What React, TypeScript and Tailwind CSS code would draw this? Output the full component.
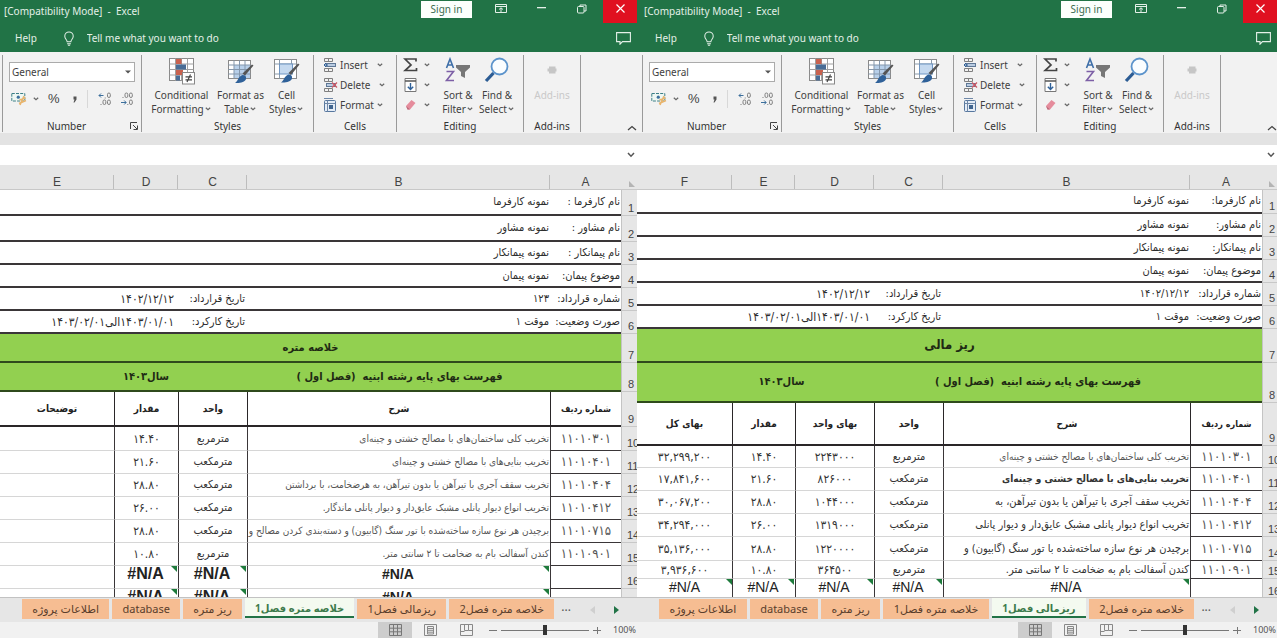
import React from "react";

type SheetRow = {
  n: string;
  h: string;
};

type Item = {
  row: SheetRow;
  code: string;
  desc: string;
  descClass: string;
  values: string[];
};

type Tab = { label: string; active?: boolean };

const UI_FONT = "font-['Noto_Sans','DejaVu_Sans',sans-serif]";
const FA_FONT = "font-['DejaVu_Sans_Condensed','DejaVu_Sans',sans-serif]";

function Caret({ className = "" }: { className?: string }) {
  return (
    <svg viewBox="0 0 8 6" className={`inline-block h-[6px] w-2 shrink-0 ${className}`} fill="none" stroke="#666" strokeWidth="1.2">
      <path d="M1.8 1.8 4 3.8 6.2 1.8" />
    </svg>
  );
}

function TableIcon({ variant }: { variant: "conditional" | "format" | "cell" }) {
  return (
    <svg viewBox="0 0 28 28" className="h-7 w-7" fill="none">
      {variant === "conditional" && (
        <>
          <rect x="1.5" y="1.5" width="24" height="22" fill="#fff" stroke="#8a8a8a" />
          <path d="M1.5 7h24M1.5 12.5h24M1.5 18h24M7.5 1.5v22M13.5 1.5v22M19.5 1.5v22" stroke="#a0a0a0" />
          <rect x="8" y="2" width="5.5" height="5" fill="#c9624f" />
          <rect x="8" y="7.5" width="10" height="5" fill="#4a6d96" />
          <rect x="8" y="13" width="7" height="5" fill="#c9624f" />
          <rect x="8" y="18.5" width="4" height="5" fill="#4a6d96" />
          <rect x="14.5" y="15.5" width="12" height="11.5" fill="#fff" stroke="#888" />
          <path d="M17.5 19.800h6.500M17.5 22.800h6.500M22.500 17.500l-3.500 7.500" stroke="#444" strokeWidth="1.200" />
        </>
      )}
      {variant === "format" && (
        <>
          <rect x="1.5" y="3.5" width="22" height="18" fill="#fff" stroke="#8a8a8a" />
          <rect x="7" y="8" width="16" height="13" fill="#b8d0ea" />
          <path d="M1.5 8h22M1.5 12.5h22M1.5 17h22M7 3.5v18M12.5 3.5v18M18 3.5v18" stroke="#8497ac" />
          <path d="M26.5 8.5 18 18.5l-2.5-2L25 7.5z" fill="#555" />
          <path d="M15.5 18c2.5 0 4 1.5 3.500 4-1 3-6 4.500-11 4 3-1.500 3-6.500 7.500-8z" fill="#2f6199" />
        </>
      )}
      {variant === "cell" && (
        <>
          <rect x="1.5" y="2.5" width="22" height="19" fill="#fff" stroke="#8a8a8a" />
          <path d="M1.5 7h22M6.5 2.5v19M18.5 2.5v4.500M1.5 17h5" stroke="#8a9aab" />
          <rect x="6.5" y="7" width="13" height="10" fill="#c5d9ef" stroke="#6e95c2" />
          <path d="M26.5 7.5 18 18l-2.500-2L25 6.500z" fill="#555" />
          <path d="M15.5 17.500c2.500 0 4 1.500 3.500 4-1 3-6 4.500-11 4 3-1.500 3-6.500 7.500-8z" fill="#2f6199" />
        </>
      )}
    </svg>
  );
}

function CellsIcon({ variant }: { variant: "insert" | "delete" | "format" }) {
  return (
    <svg viewBox="0 0 15 14" className="h-[14px] w-[15px] shrink-0" fill="none">
      {variant !== "format" ? (
        <>
          <path d="M1.5.5h8v3h-8zM1.5 10.500h8v3h-8zM5.5.5v3M5.5 10.500v3" stroke="#808080" />
          <rect x="3.5" y="5.500" width="9" height="3" fill="#b9cce2" stroke="#5f7896" />
          {variant === "insert" ? (
            <path d="M5 7H1M3 5 1 7l2 2" stroke="#2f6199" />
          ) : (
            <path d="m9 4.500 5 5M14 4.500l-5 5" stroke="#d05a66" strokeWidth="1.300" />
          )}
        </>
      ) : (
        <>
          <rect x="1.5" y="2.500" width="11" height="11" rx="1" fill="#e4ecf6" stroke="#56779e" />
          <path d="M1 .5h9M1.5 5.500h11M4.5 2.500v11" stroke="#6f88a8" />
          <rect x="6" y="7" width="4" height="4" fill="#3f648f" />
        </>
      )}
    </svg>
  );
}

function Group({ label, className, launcher, children }: { label: string; className: string; launcher?: boolean; children: React.ReactNode }) {
  return (
    <section className={`flex h-[77px] shrink-0 flex-col border-r border-[#9a9a9a] ${className}`} aria-label={label}>
      <div className="flex flex-1 justify-center">{children}</div>
      <div className="flex h-[12px] items-center text-[10px] leading-3 text-[#333]">
        <span className="flex-1 text-center">{label}</span>
        {launcher && (
          <button aria-label="Number format settings" className="mr-[2px]">
            <svg viewBox="0 0 9 9" className="h-[9px] w-[9px]" fill="none" stroke="#444">
              <path d="M.5 7V.5H7M3 3l4 4M7.5 3.500v4h-4" />
            </svg>
          </button>
        )}
      </div>
    </section>
  );
}

function BigButton({ icon, top, bottom, className }: { icon: React.ReactNode; top: string; bottom?: string; className: string }) {
  return (
    <button className={`flex flex-col items-center pt-[2px] ${className}`}>
      <span className="flex h-[31px] items-start">{icon}</span>
      <span className="text-[10px] leading-[14px] whitespace-nowrap">{top}</span>
      {bottom && (
        <span className="flex items-center text-[10px] leading-[14px] whitespace-nowrap">
          {bottom}
          <Caret />
        </span>
      )}
    </button>
  );
}

function TitleBar() {
  return (
    <header className="bg-[#217346] text-[#e4f0e8]">
      <div className="flex h-6 items-start">
        <h1 className="flex-1 pl-1 text-[10px] leading-[22px] whitespace-pre">[Compatibility Mode]  -  Excel</h1>
        <button className="mt-[1px] mr-[23px] h-[17px] w-[51px] bg-[#fbfffc] text-[10px] leading-[17px] text-[#3b6b4f]">Sign in</button>
        <button aria-label="Ribbon display options" className="mt-1 mr-[30px]">
          <svg viewBox="0 0 12 9" className="h-[9px] w-3" fill="none" stroke="currentColor">
            <path d="M.5.5h11v8H.5zM.5 2.500h11M6 8V4M4 5.500 6 3.800l2 1.700" />
          </svg>
        </button>
        <button aria-label="Minimize" className="mt-[7px] mr-[31px]">
          <svg viewBox="0 0 9 2" className="h-[2px] w-[9px]" fill="currentColor">
            <path d="M0 0h9v1.300H0z" />
          </svg>
        </button>
        <button aria-label="Restore" className="mt-1 mr-4">
          <svg viewBox="0 0 10 10" className="h-[10px] w-[10px]" fill="none" stroke="currentColor">
            <rect x=".5" y="2.500" width="6.500" height="6.500" rx="1" />
            <path d="M3 2.500V1h6v6H7" />
          </svg>
        </button>
        <button aria-label="Close" className="flex h-[23px] w-[34px] items-center justify-center bg-[#e01020] pb-[6px]">
          <svg viewBox="0 0 9 9" className="h-[9px] w-[9px]" fill="none" stroke="#fff" strokeWidth="1.200">
            <path d="m.5.5 8 8M8.500.5l-8 8" />
          </svg>
        </button>
      </div>
      <nav className="flex h-7 items-center pr-[6px] pl-[15px] text-[10px]">
        <button>Help</button>
        <svg viewBox="0 0 12 16" className="mr-[12px] ml-[26px] h-[15px] w-3" fill="none" stroke="currentColor" strokeWidth="1.100">
          <path d="M4 11.500c0-2-2.500-3-2.500-6a4.500 4.500 0 0 1 9 0c0 3-2.500 4-2.500 6zM4 13.500h4M4.800 15.300h2.400" />
        </svg>
        <input aria-label="Tell me what you want to do" placeholder="Tell me what you want to do" className="w-44 bg-transparent outline-none placeholder:text-[#e4f0e8]" />
        <button aria-label="Comments" className="ml-auto">
          <svg viewBox="0 0 15 13" className="h-[13px] w-[15px]" fill="none" stroke="currentColor" strokeWidth="1.100">
            <path d="M.6.6h13.800v9H6.500L4 12.200V9.600H.6z" />
          </svg>
        </button>
      </nav>
    </header>
  );
}

function Ribbon() {
  return (
    <div className="flex h-[81px] items-start overflow-hidden bg-[#f2f2f2] pt-[3px] text-[#3f3f3f]">
      <div className="h-[77px] w-[3px] shrink-0 border-r border-[#9a9a9a]" />
      <Group label="Number" className="w-[139px]" launcher>
        <div className="flex flex-1 flex-col px-[6px] pt-[7px]">
          <div className="relative h-5">
            <select aria-label="Number format" className="block h-5 w-full appearance-none border border-[#ababab] bg-white pl-[2px] text-[10px] leading-[18px] outline-none">
              <option>General</option>
            </select>
            <svg viewBox="0 0 6 4" className="pointer-events-none absolute top-2 right-1 h-1 w-[6px]" fill="#555">
              <path d="M0 .5h6L3 3.500z" />
            </svg>
          </div>
          <div className="mt-[9px] flex h-4 items-center">
            <button aria-label="Accounting format" className="ml-[2px] flex items-center gap-1">
              <svg viewBox="0 0 17 14" className="h-[14px] w-[17px]" fill="none">
                <rect x=".8" y="1.500" width="13" height="7.500" fill="#eef7f3" stroke="#3c7f86" strokeDasharray="3 1.200" />
                <circle cx="7.300" cy="5.200" r="1.600" fill="#3c6f9c" />
                <path d="M13 4 9 13M14.500 6l-6 2M15 8.500l-7 3" stroke="#e9b56e" strokeWidth="1.600" />
              </svg>
              <Caret />
            </button>
            <button className="ml-[8px] font-['Liberation_Sans',sans-serif] text-[13px] leading-4">%</button>
            <button aria-label="Comma style" className="ml-[13px]">
              <svg viewBox="0 0 4 7" className="h-[7px] w-1" fill="#555">
                <path d="M.5.5h3v3L1.500 6.500H.5L1.500 3.500h-1z" />
              </svg>
            </button>
            <span className="mx-[10px] h-[18px] border-l border-[#d8d8d8]" />
            <button aria-label="Increase decimal">
              <svg viewBox="0 0 14 14" className="h-[14px] w-[14px]" fill="none" stroke="#808080">
                <path d="M5.500 3.500H1M3 1.500l-2 2 2 2" stroke="#3c6f9c" />
                <rect x="9.500" y="1" width="2.800" height="4.500" rx="1.400" />
                <rect x="5" y="8" width="2.800" height="4.500" rx="1.400" />
                <rect x="9.500" y="8" width="2.800" height="4.500" rx="1.400" />
                <path d="M7.200 5.500v1M3 12v1" />
              </svg>
            </button>
            <button aria-label="Decrease decimal" className="ml-2">
              <svg viewBox="0 0 14 14" className="h-[14px] w-[14px]" fill="none" stroke="#808080">
                <rect x="5" y="1" width="2.800" height="4.500" rx="1.400" />
                <rect x="9.500" y="1" width="2.800" height="4.500" rx="1.400" />
                <path d="M1 10.500h5M4.200 8.500l2 2-2 2" stroke="#3c6f9c" />
                <rect x="9.500" y="8" width="2.800" height="4.500" rx="1.400" />
                <path d="M3 5v1M7.800 12v1" />
              </svg>
            </button>
          </div>
        </div>
      </Group>
      <Group label="Styles" className="w-[172px]">
        <BigButton className="w-[66px]" icon={<TableIcon variant="conditional" />} top="Conditional" bottom="Formatting" />
        <BigButton className="w-[52px]" icon={<TableIcon variant="format" />} top="Format as" bottom="Table" />
        <BigButton className="w-[40px]" icon={<TableIcon variant="cell" />} top="Cell" bottom="Styles" />
      </Group>
      <Group label="Cells" className="w-[83px]">
        <div className="flex flex-1 flex-col pl-[9px] text-[10px]">
          <button className="flex h-5 items-center gap-[2px]">
            <CellsIcon variant="insert" />
            Insert
            <Caret className="ml-[6px]" />
          </button>
          <button className="flex h-5 items-center gap-[2px]">
            <CellsIcon variant="delete" />
            Delete
            <Caret className="ml-[6px]" />
          </button>
          <button className="flex h-5 items-center gap-[2px]">
            <CellsIcon variant="format" />
            Format
            <Caret />
          </button>
        </div>
      </Group>
      <Group label="Editing" className="w-[127px]">
        <div className="mr-[2px] flex w-[34px] flex-col">
          <button aria-label="AutoSum" className="flex h-5 items-center gap-[5px]">
            <svg viewBox="0 0 15 14" className="h-[14px] w-[15px]" fill="none" stroke="#444" strokeWidth="1.700">
              <path d="M13 3.500V1H2l6 6-6 5.500h11.500V10" />
            </svg>
            <Caret />
          </button>
          <button aria-label="Fill" className="flex h-5 items-center gap-[5px]">
            <svg viewBox="0 0 15 14" className="h-[14px] w-[15px]" fill="none">
              <path d="M2 .5h11v13H2z" fill="#fff" stroke="#777" />
              <path d="M2 3h11" stroke="#555" strokeWidth="1.500" />
              <path d="M7.500 5v6.500M4.800 8.800l2.700 2.700 2.700-2.700" stroke="#2f6199" strokeWidth="1.400" />
            </svg>
            <Caret />
          </button>
          <button aria-label="Clear" className="flex h-5 items-center gap-[5px]">
            <svg viewBox="0 0 15 14" className="h-[14px] w-[15px]">
              <path d="m3 8 5.500-6 4 3L7 11.500H4.500z" fill="#e58c9c" />
              <path d="m3 8 4 3.500H4.500z" fill="#b9687a" />
            </svg>
            <Caret />
          </button>
        </div>
        <BigButton
          className="w-[38px]"
          icon={
            <svg viewBox="0 0 28 26" className="h-[26px] w-7" fill="none">
              <path d="m2.500 11 3.500-9 3.500 9M3.800 8h4.400" stroke="#3f6fa8" strokeWidth="1.600" />
              <path d="M2.500 14.500h7L2.500 23.500h7.500" stroke="#7d5fa6" strokeWidth="1.600" />
              <path d="M12 8h14v2.500l-5 4.500v6l-4-2v-4l-5-4.500z" fill="#777" />
            </svg>
          }
          top="Sort &"
          bottom="Filter"
        />
        <BigButton
          className="w-[40px]"
          icon={
            <svg viewBox="0 0 26 26" className="h-[26px] w-[26px]" fill="none">
              <path d="M9.500 16 2 24" stroke="#2c5c94" strokeWidth="3.200" />
              <circle cx="15.500" cy="9.500" r="8" fill="#fafdff" stroke="#5b93cb" strokeWidth="1.800" />
            </svg>
          }
          top="Find &"
          bottom="Select"
        />
      </Group>
      <Group label="Add-ins" className="w-[57px]">
        <button disabled className="flex flex-col items-center pt-[2px] text-[#c9c9c9]">
          <span className="flex h-[31px] items-center pb-[6px]">
            <svg viewBox="0 0 10 10" className="h-[10px] w-[10px]" fill="#c6c6c6">
              <path d="M2 1.500h6.500v7H2z" />
              <path d="M.5 3.500h9v3h-9z" />
            </svg>
          </span>
          <span className="text-[10px] leading-[14px] whitespace-nowrap">Add-ins</span>
        </button>
      </Group>
      <button aria-label="Collapse ribbon" className="mt-[70px] ml-auto">
        <svg viewBox="0 0 10 6" className="h-[6px] w-[10px]" fill="none" stroke="#444" strokeWidth="1.300">
          <path d="M1 5 5 1.500 9 5" />
        </svg>
      </button>
    </div>
  );
}

function FormulaBar() {
  return (
    <div className="border-t-[12px] border-[#e3e3e3]">
      <div className="flex h-5 items-center bg-white">
        <input aria-label="Formula bar" className="h-5 flex-1 bg-white outline-none" />
        <button aria-label="Expand formula bar" className="mr-[2px]">
          <svg viewBox="0 0 8 6" className="h-[6px] w-2" fill="none" stroke="#555" strokeWidth="1.500">
            <path d="M1 1 4 4.200 7 1" />
          </svg>
        </button>
      </div>
    </div>
  );
}

function RowHeader({ row }: { row: SheetRow }) {
  return (
    <th scope="row" dir="ltr" className="overflow-hidden border-b border-l border-b-[#c8c8c8] border-l-[#c4c4c4] bg-[#e6e6e6] pl-[6px] text-left align-bottom font-['Liberation_Sans',sans-serif] text-[11px] leading-[14px] font-normal text-[#444]">
      {row.n}
    </th>
  );
}

function ColumnHeads({ letters }: { letters: string[] }) {
  return (
    <thead>
      <tr className="h-[25px] bg-[#e6e6e6] font-['Liberation_Sans',sans-serif] text-[12px] leading-[14px] text-[#444]">
        <th className="border-b border-[#c8c8c8] pb-[2px] align-bottom font-normal">
          <svg viewBox="0 0 6 6" className="mr-[2px] ml-auto h-[6px] w-[6px]" fill="#b4b4b4">
            <path d="M0 0v6h6z" />
          </svg>
        </th>
        {letters.map((l, i) => (
          <th
            key={l}
            scope="col"
            className={`border-b border-[#c8c8c8] bg-no-repeat pt-[9px] align-bottom font-normal ${
              i > 0 ? "bg-[linear-gradient(#bdbdbd,#bdbdbd)] bg-[length:1px_14px] bg-right-bottom" : ""
            }`}
          >
            {l}
          </th>
        ))}
      </tr>
    </thead>
  );
}

function ErrorMark() {
  return (
    <svg viewBox="0 0 6 6" className="absolute top-0 right-0 h-[6px] w-[6px]" fill="#1e7b3c">
      <path d="M0 0h6v6z" />
    </svg>
  );
}

function InfoRow({ row, label, value, label2, value2, rest }: { row: SheetRow; label: string; value: string; label2?: string; value2?: string; rest: number }) {
  return (
    <tr className={`text-[11px] ${row.h}`}>
      <RowHeader row={row} />
      <td className="border-b-2 border-[#3a3638] pr-[1px]">{label}</td>
      <td className="border-b-2 border-[#3a3638] pr-[1px]">{value}</td>
      <td className="border-b-2 border-[#3a3638] pr-[2px]">{label2}</td>
      <td colSpan={rest} className="border-b-2 border-[#3a3638] pr-1 text-[12px]">
        {value2}
      </td>
    </tr>
  );
}

const DARK = "border-l border-[#3a3638]";

function ItemRow({ item, valueClass }: { item: Item; valueClass: string }) {
  return (
    <tr className={item.row.h}>
      <RowHeader row={item.row} />
      <td className={`${DARK} border-b text-center text-[13px] text-[#555]`}>{item.code}</td>
      <td className={`border-b border-l border-b-[#d6d6d6] border-l-[#3a3638] pr-[1px] ${item.descClass}`}>{item.desc}</td>
      {item.values.map((v, i) => (
        <td
          key={i}
          className={`border-b border-b-[#d6d6d6] text-center text-[#333] ${i === 0 ? "text-[11px]" : valueClass} ${i < item.values.length - 1 ? "border-l border-l-[#3a3638]" : ""}`}
        >
          {v}
        </td>
      ))}
    </tr>
  );
}

function ErrorRow({ row, sizes, emptyLast }: { row: SheetRow; sizes: string[]; emptyLast?: boolean }) {
  return (
    <tr className={row.h}>
      <RowHeader row={row} />
      <td className={`${DARK} border-b`} />
      {sizes.map((size, i) => (
        <td
          key={i}
          dir="ltr"
          className={`relative border-b border-b-[#d6d6d6] text-center align-top font-['Liberation_Sans',sans-serif] leading-4 text-[#222] ${size} ${emptyLast || i < sizes.length - 1 ? "border-l border-l-[#3a3638]" : ""}`}
        >
          #N/A
          <ErrorMark />
        </td>
      ))}
      {emptyLast && <td className="border-b border-[#d6d6d6]" />}
    </tr>
  );
}

function HeadRow({ row, labels }: { row: SheetRow; labels: string[] }) {
  return (
    <tr className={row.h}>
      <RowHeader row={row} />
      {labels.map((l, i) => (
        <th key={l} className={`border-b-2 border-[#2a2628] text-center font-bold text-[#222] ${i === 0 ? "text-[9px]" : "text-[10px]"} ${i < labels.length - 1 ? "border-l" : ""}`}>
          {l}
        </th>
      ))}
    </tr>
  );
}

function StatusBar() {
  return (
    <footer className="flex h-4 items-center justify-end bg-[#f1f1f1] text-[#555]">
      <button aria-label="Normal view" className="flex h-4 w-[34px] items-center justify-center bg-[#cdcdcd]">
        <svg viewBox="0 0 13 12" className="h-3 w-[13px]" fill="none" stroke="#777">
          <path d="M.5.5h12v11H.5zM.5 4.200h12M.5 7.800h12M4.500.5v11M8.500.5v11" />
        </svg>
      </button>
      <button aria-label="Page layout view" className="ml-3">
        <svg viewBox="0 0 13 12" className="h-3 w-[13px]" fill="none" stroke="#888">
          <path d="M.5.5h12v11H.5zM3.500 2.500h6v7.500h-6zM4 4.500h5M4 6.300h5M4 8.200h5" />
        </svg>
      </button>
      <button aria-label="Page break preview" className="ml-[23px]">
        <svg viewBox="0 0 13 12" className="h-3 w-[13px]" fill="none" stroke="#888">
          <path d="M.5.5h12v11H.5zM4.500.5v6h4v-6M.5 7.500h4M8.500 6.500h4" />
        </svg>
      </button>
      <button aria-label="Zoom out" className="ml-4 flex h-4 items-center">
        <svg viewBox="0 0 8 8" className="h-2 w-2" stroke="#777">
          <path d="M0 4.500h8" />
        </svg>
      </button>
      <input
        type="range"
        aria-label="Zoom"
        defaultValue={50}
        className="mx-1 h-3 w-[88px] appearance-none bg-[linear-gradient(#777,#777)] bg-[length:100%_1px] bg-center bg-no-repeat [&::-webkit-slider-thumb]:h-[10px] [&::-webkit-slider-thumb]:w-1 [&::-webkit-slider-thumb]:appearance-none [&::-webkit-slider-thumb]:bg-[#333]"
      />
      <button aria-label="Zoom in" className="flex h-4 items-center">
        <svg viewBox="0 0 8 8" className="h-2 w-2" stroke="#777">
          <path d="M0 4.500h8M4.500 1v7" />
        </svg>
      </button>
      <span className="ml-3 w-6 text-[9px] leading-4 whitespace-nowrap">100%</span>
    </footer>
  );
}

function SheetTabs({ tabs }: { tabs: Tab[] }) {
  return (
    <nav className="flex h-[25px] items-start gap-[3px] border-t border-[#c2c2c2] bg-[#e6e6e6] pr-[18px] pl-[22px]" aria-label="Sheets">
      {tabs.map((t) => (
        <button
          key={t.label}
          dir="rtl"
          className={`h-5 grow leading-5 whitespace-nowrap ${
            t.active ? "border-b-2 border-[#217346] bg-[#f4faf0] text-[10px] font-bold text-[#3d7a4c]" : "mt-[1px] bg-[#f6bd92] text-[11px] text-[#5a3e2c]"
          }`}
        >
          {t.label}
        </button>
      ))}
      <span className="ml-1 text-[12px] leading-[18px] text-[#555]">...</span>
      <button aria-label="Previous sheet" className="mt-2 ml-4">
        <svg viewBox="0 0 5 8" className="h-2 w-[5px]" fill="#cfcfcf">
          <path d="M5 0v8L0 4z" />
        </svg>
      </button>
      <button aria-label="Next sheet" className="mt-2 ml-4">
        <svg viewBox="0 0 5 8" className="h-2 w-[5px]" fill="#217346">
          <path d="M0 0v8l5-4z" />
        </svg>
      </button>
    </nav>
  );
}

function Pane({ inset, tabs, children }: { inset?: boolean; tabs: Tab[]; children: React.ReactNode }) {
  return (
    <section className="flex min-w-0 flex-col overflow-hidden">
      <div className={`bg-[#217346] ${inset ? "pl-[3px]" : ""}`}>
        <TitleBar />
      </div>
      <div className={`bg-[#f2f2f2] ${inset ? "pl-[3px]" : ""}`}>
        <Ribbon />
      </div>
      <FormulaBar />
      <main dir="rtl" className={`min-h-0 flex-1 overflow-hidden bg-white text-[10px] leading-4 whitespace-nowrap text-[#2c2c2c] ${FA_FONT}`}>
        {children}
      </main>
      <SheetTabs tabs={tabs} />
      <StatusBar />
    </section>
  );
}

const square = "مترمربع";
const cubic = "مترمکعب";

const summaryDesc = "text-[10px] text-[#555]";
const summaryItems: Item[] = [
  { row: { n: "10", h: "h-6" }, code: "۱۱۰۱۰۳۰۱", desc: "تخریب کلی ساختمان‌های با مصالح خشتی و چینه‌ای", descClass: summaryDesc, values: [square, "۱۴.۴۰", ""] },
  { row: { n: "11", h: "h-[23px]" }, code: "۱۱۰۱۰۴۰۱", desc: "تخریب بنایی‌های با مصالح خشتی و چینه‌ای", descClass: summaryDesc, values: [cubic, "۲۱.۶۰", ""] },
  { row: { n: "12", h: "h-[23px]" }, code: "۱۱۰۱۰۴۰۴", desc: "تخریب سقف آجری با تیرآهن یا بدون تیرآهن، به هرضخامت، با برداشتن", descClass: summaryDesc, values: [cubic, "۲۸.۸۰", ""] },
  { row: { n: "13", h: "h-[23px]" }, code: "۱۱۰۱۰۴۱۲", desc: "تخریب  انواع دیوار پانلی مشبک عایق‌دار و دیوار پانلی ماندگار.", descClass: summaryDesc, values: [cubic, "۲۶.۰۰", ""] },
  { row: { n: "14", h: "h-[23px]" }, code: "۱۱۰۱۰۷۱۵", desc: "برچیدن هر نوع سازه ساخته‌شده با تور سنگ (گابیون) و دسته‌بندی کردن مصالح و", descClass: summaryDesc, values: [cubic, "۲۸.۸۰", ""] },
  { row: { n: "15", h: "h-[23px]" }, code: "۱۱۰۱۰۹۰۱", desc: "کندن آسفالت بام به ضخامت تا ۲ سانتی متر.", descClass: summaryDesc, values: [square, "۱۰.۸۰", ""] },
];

const costDesc = "text-[11px] text-[#333]";
const costItems: Item[] = [
  { row: { n: "10", h: "h-[22px]" }, code: "۱۱۰۱۰۳۰۱", desc: "تخریب کلی ساختمان‌های با مصالح خشتی و چینه‌ای", descClass: summaryDesc, values: [square, "۲۲۴۳۰۰۰", "۱۴.۴۰", "۳۲,۲۹۹,۲۰۰"] },
  { row: { n: "11", h: "h-[23px]" }, code: "۱۱۰۱۰۴۰۱", desc: "تخریب بنایی‌های با مصالح خشتی و چینه‌ای", descClass: "text-[10px] font-bold text-[#333]", values: [cubic, "۸۲۶۰۰۰", "۲۱.۶۰", "۱۷,۸۴۱,۶۰۰"] },
  { row: { n: "12", h: "h-[23px]" }, code: "۱۱۰۱۰۴۰۴", desc: "تخریب سقف آجری با تیرآهن یا بدون تیرآهن، به", descClass: costDesc, values: [cubic, "۱۰۴۴۰۰۰", "۲۸.۸۰", "۳۰,۰۶۷,۲۰۰"] },
  { row: { n: "13", h: "h-[23px]" }, code: "۱۱۰۱۰۴۱۲", desc: "تخریب  انواع دیوار پانلی مشبک عایق‌دار و دیوار پانلی", descClass: costDesc, values: [cubic, "۱۳۱۹۰۰۰", "۲۶.۰۰", "۳۴,۲۹۴,۰۰۰"] },
  { row: { n: "14", h: "h-6" }, code: "۱۱۰۱۰۷۱۵", desc: "برچیدن هر نوع سازه ساخته‌شده با تور سنگ (گابیون) و", descClass: costDesc, values: [cubic, "۱۲۲۰۰۰۰", "۲۸.۸۰", "۳۵,۱۳۶,۰۰۰"] },
  { row: { n: "15", h: "h-[18px]" }, code: "۱۱۰۱۰۹۰۱", desc: "کندن آسفالت بام به ضخامت تا ۲ سانتی متر.", descClass: costDesc, values: [square, "۳۶۴۵۰۰", "۱۰.۸۰", "۳,۹۳۶,۶۰۰"] },
];

const GREEN = "border-b-2 border-[#2f4a1c] bg-[#92d050] text-center font-bold text-[#1f2a14]";
const SUMMARY_ERRORS = ["text-[14px] font-bold", "text-[16px] font-bold", "text-[16px] font-bold"];
const COST_ERRORS = ["text-[14px]", "text-[14px]", "text-[14px]", "text-[14px]", "text-[14px]"];

function SummarySheet() {
  return (
    <table className="w-full table-fixed border-separate border-spacing-0">
      <colgroup>
        <col className="w-4" />
        <col className="w-[71px]" />
        <col />
        <col className="w-[69px]" />
        <col className="w-[64px]" />
        <col className="w-[114px]" />
      </colgroup>
      <ColumnHeads letters={["A", "B", "C", "D", "E"]} />
      <tbody>
        <InfoRow row={{ n: "1", h: "h-[26px]" }} label="نام کارفرما :" value="نمونه کارفرما" rest={2} />
        <InfoRow row={{ n: "2", h: "h-[26px]" }} label="نام مشاور :" value="نمونه مشاور" rest={2} />
        <InfoRow row={{ n: "3", h: "h-[23px]" }} label="نام پیمانکار :" value="نمونه پیمانکار" rest={2} />
        <InfoRow row={{ n: "4", h: "h-[23px]" }} label="موضوع پیمان:" value="نمونه پیمان" rest={2} />
        <InfoRow row={{ n: "5", h: "h-[23px]" }} label="شماره قرارداد:" value="۱۲۳" label2="تاریخ قرارداد:" value2="۱۴۰۲/۱۲/۱۲" rest={2} />
        <InfoRow row={{ n: "6", h: "h-[23px]" }} label="صورت وضعیت:" value="موقت ۱" label2="تاریخ کارکرد:" value2="۱۴۰۳/۰۱/۰۱الی۱۴۰۳/۰۲/۰۱" rest={2} />
        <tr className="h-[29px]">
          <RowHeader row={{ n: "7", h: "" }} />
          <td colSpan={5} className={`${GREEN} text-[11px]`}>خلاصه متره</td>
        </tr>
        <tr className="h-[29px]">
          <RowHeader row={{ n: "8", h: "" }} />
          <td colSpan={3} className={`${GREEN} text-[11px] whitespace-pre`}>فهرست بهای پایه رشته ابنیه  (فصل اول )</td>
          <td className={`${GREEN} text-[11px]`}>سال۱۴۰۳</td>
          <td className={GREEN} />
        </tr>
        <HeadRow row={{ n: "9", h: "h-[35px]" }} labels={["شماره ردیف", "شرح", "واحد", "مقدار", "توضیحات"]} />
        {summaryItems.map((it) => (
          <ItemRow key={it.code} item={it} valueClass="text-[12px]" />
        ))}
        <ErrorRow row={{ n: "16", h: "h-[23px]" }} sizes={SUMMARY_ERRORS} emptyLast />
        <ErrorRow row={{ n: "17", h: "h-[23px]" }} sizes={SUMMARY_ERRORS} emptyLast />
      </tbody>
    </table>
  );
}

function CostSheet() {
  return (
    <table className="w-full table-fixed border-separate border-spacing-0">
      <colgroup>
        <col className="w-[15px]" />
        <col className="w-[72px]" />
        <col />
        <col className="w-[69px]" />
        <col className="w-[79px]" />
        <col className="w-[63px]" />
        <col className="w-[95px]" />
      </colgroup>
      <ColumnHeads letters={["A", "B", "C", "D", "E", "F"]} />
      <tbody>
        <InfoRow row={{ n: "1", h: "h-6" }} label="نام کارفرما:" value="نمونه کارفرما" rest={3} />
        <InfoRow row={{ n: "2", h: "h-[23px]" }} label="نام مشاور:" value="نمونه مشاور" rest={3} />
        <InfoRow row={{ n: "3", h: "h-[23px]" }} label="نام پیمانکار:" value="نمونه پیمانکار" rest={3} />
        <InfoRow row={{ n: "4", h: "h-[23px]" }} label="موضوع پیمان:" value="نمونه پیمان" rest={3} />
        <InfoRow row={{ n: "5", h: "h-[23px]" }} label="شماره قرارداد:" value="۱۴۰۲/۱۲/۱۲" label2="تاریخ قرارداد:" value2="۱۴۰۲/۱۲/۱۲" rest={3} />
        <InfoRow row={{ n: "6", h: "h-[23px]" }} label="صورت وضعیت:" value="موقت ۱" label2="تاریخ کارکرد:" value2="۱۴۰۳/۰۱/۰۱الی۱۴۰۳/۰۲/۰۱" rest={3} />
        <tr className="h-[34px]">
          <RowHeader row={{ n: "7", h: "" }} />
          <td colSpan={6} className={`${GREEN} text-[13px]`}>ریز مالی</td>
        </tr>
        <tr className="h-[40px]">
          <RowHeader row={{ n: "8", h: "" }} />
          <td colSpan={3} className={`${GREEN} pr-[60px] text-[11px] whitespace-pre`}>فهرست بهای پایه رشته ابنیه  (فصل اول )</td>
          <td colSpan={3} className={`${GREEN} pl-[52px] text-[11px]`}>سال۱۴۰۳</td>
        </tr>
        <HeadRow row={{ n: "9", h: "h-[43px]" }} labels={["شماره ردیف", "شرح", "واحد", "بهای واحد", "مقدار", "بهای کل"]} />
        {costItems.map((it) => (
          <ItemRow key={it.code} item={it} valueClass="text-[12px]" />
        ))}
        <ErrorRow row={{ n: "16", h: "h-5" }} sizes={COST_ERRORS} />
      </tbody>
    </table>
  );
}

const T = {
  info: "اطلاعات پروژه",
  db: "database",
  detail: "ریز متره",
  sum1: "خلاصه متره فصل1",
  cost1: "ریزمالی فصل1",
  sum2: "خلاصه متره فصل2",
};

export default function App() {
  return (
    <div className={`grid h-screen grid-cols-[637fr_640fr] grid-rows-[minmax(0,1fr)] overflow-hidden bg-[#e6e6e6] ${UI_FONT}`}>
      <Pane tabs={[{ label: T.info }, { label: T.db }, { label: T.detail }, { label: T.sum1, active: true }, { label: T.cost1 }, { label: T.sum2 }]}>
        <SummarySheet />
      </Pane>
      <Pane inset tabs={[{ label: T.info }, { label: T.db }, { label: T.detail }, { label: T.sum1 }, { label: T.cost1, active: true }, { label: T.sum2 }]}>
        <CostSheet />
      </Pane>
    </div>
  );
}
